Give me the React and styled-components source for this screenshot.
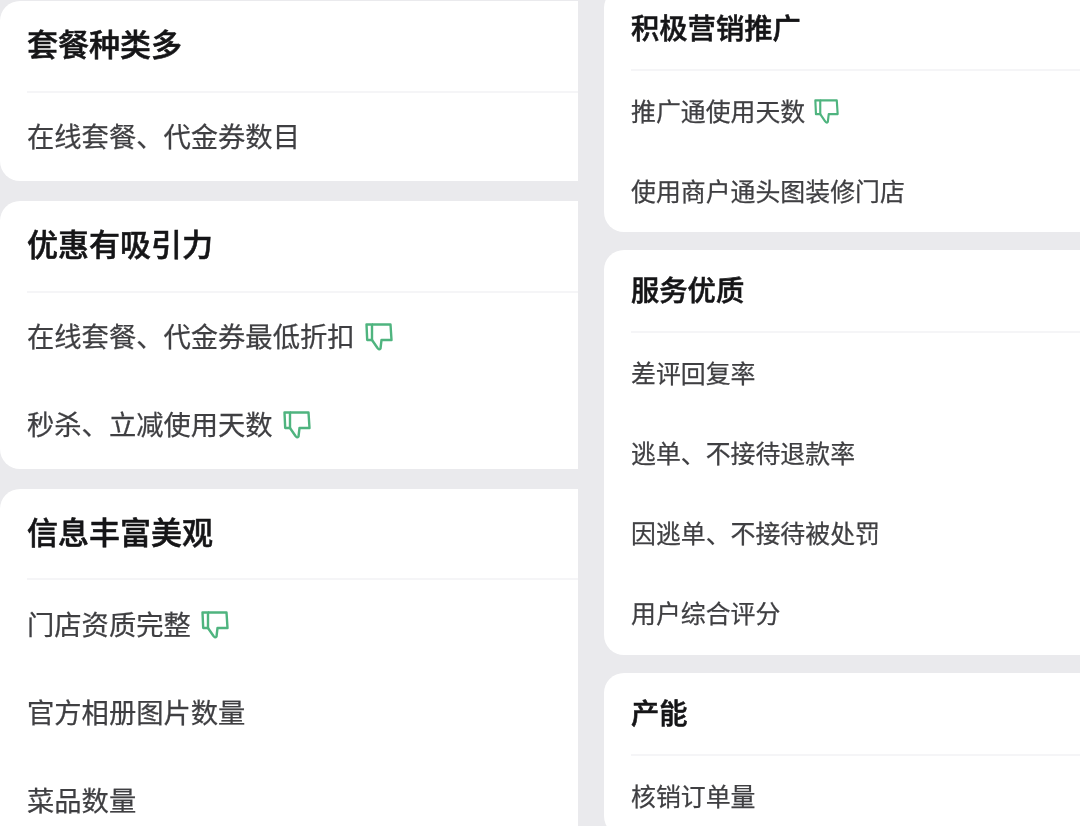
import React from "react";
import styled, { createGlobalStyle } from "styled-components";

const Global = createGlobalStyle`
  html, body { margin: 0; padding: 0; background: #eaeaed; }
  body { font-family: "Noto Sans CJK SC", "Noto Sans", sans-serif; }
`;

const Page = styled.div`
  width: 1080px;
  height: 826px;
  overflow: hidden;
  display: flex;
  justify-content: space-between;
  background: #eaeaed;
  filter: blur(0.6px);
`;

const Column = styled.div`
  width: ${(p) => p.$width}px;
  height: 826px;
  overflow: hidden;
  flex: none;
`;

const Stack = styled.div`
  display: flex;
  flex-direction: column;
  gap: ${(p) => p.$gap}px;
  margin-top: ${(p) => p.$top}px;
`;

const Card = styled.section`
  background: #fff;
  border-radius: 20px;
  margin-right: -30px;
  padding-left: 27px;
  padding-bottom: ${(p) => p.$pb}px;
  flex: none;
`;

const Title = styled.h2`
  margin: 0;
  height: ${(p) => p.$h}px;
  box-sizing: border-box;
  padding-bottom: ${(p) => p.$pb}px;
  display: flex;
  align-items: center;
  font-size: ${(p) => p.$size}px;
  font-weight: 500;
  line-height: 1;
  color: #151517;
  -webkit-text-stroke: 0.55px #151517;
  border-bottom: 2px solid #f5f5f7;
`;

const Row = styled.div`
  height: ${(p) => p.$h}px;
  box-sizing: border-box;
  padding-bottom: ${(p) => p.$pb}px;
  display: flex;
  align-items: center;
  gap: ${(p) => p.$iconGap}px;
  font-size: ${(p) => p.$size}px;
  font-weight: 400;
  line-height: 1;
  color: #3f3f42;
  -webkit-text-stroke: 0.25px #3f3f42;
`;

const ThumbIcon = styled.svg`
  flex: none;
  margin-top: 2px;
  fill: none;
  stroke: #4fb47f;
  stroke-width: 2.4;
  stroke-linejoin: round;
`;

const Thumb = ({ size }) => (
  <ThumbIcon width={size} height={size} viewBox="0 0 28 28">
    <path d="M1.5 1.5H7V17H2.2Z" />
    <path d="M7 1.5H25.5L26.5 17H16.5L15.5 25.5Q14 27.5 12.5 25L7 17" />
  </ThumbIcon>
);

const left = [
  { title: "套餐种类多", head: 92, titlePb: 8, rowPb: 2, items: [["在线套餐、代金券数目"]] },
  { title: "优惠有吸引力", head: 92, titlePb: 7, rowPb: 2, items: [["在线套餐、代金券最低折扣", true], ["秒杀、立减使用天数", true]] },
  { title: "信息丰富美观", head: 91, titlePb: 7, rowPb: 0, items: [["门店资质完整", true], ["官方相册图片数量"], ["菜品数量"]] },
];

const right = [
  { title: "积极营销推广", head: 83, titlePb: 3, rowPb: 2, cardPb: 1, items: [["推广通使用天数", true], ["使用商户通头图装修门店"]] },
  { title: "服务优质", head: 83, titlePb: 3, rowPb: 2, cardPb: 2, items: [["差评回复率"], ["逃单、不接待退款率"], ["因逃单、不接待被处罚"], ["用户综合评分"]] },
  { title: "产能", head: 83, titlePb: 3, rowPb: 2, cardPb: 0, items: [["核销订单量"]] },
];

const Group = ({ data, titleSize, itemSize, rowH, iconSize, iconGap }) => (
  <Card $pb={data.cardPb ?? 0}>
    <Title $h={data.head} $pb={data.titlePb} $size={titleSize}>{data.title}</Title>
    {data.items.map(([text, thumb]) => (
      <Row key={text} $h={rowH} $pb={data.rowPb} $size={itemSize} $iconGap={iconGap}>
        <span>{text}</span>
        {thumb && <Thumb size={iconSize} />}
      </Row>
    ))}
  </Card>
);

export default function App() {
  return (
    <Page>
      <Global />
      <Column $width={578}>
        <Stack $gap={20} $top={1}>
          {left.map((d) => (
            <Group key={d.title} data={d} titleSize={31} itemSize={27.3} rowH={88} iconSize={28} iconGap={10} />
          ))}
        </Stack>
      </Column>
      <Column $width={476}>
        <Stack $gap={18} $top={-12}>
          {right.map((d) => (
            <Group key={d.title} data={d} titleSize={28.3} itemSize={24.9} rowH={80} iconSize={25} iconGap={9} />
          ))}
        </Stack>
      </Column>
    </Page>
  );
}
